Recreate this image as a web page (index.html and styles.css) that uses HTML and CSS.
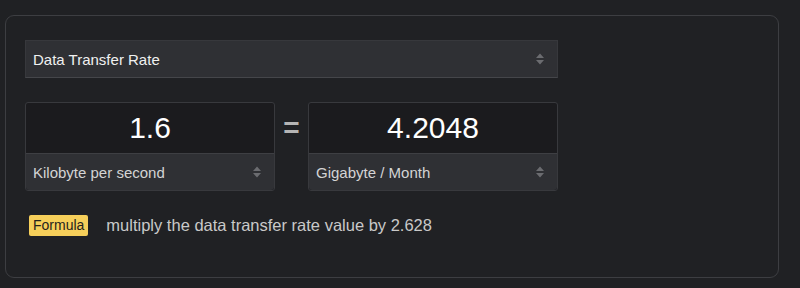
FILE: index.html
```html
<!DOCTYPE html>
<html>
<head>
    <meta charset="utf-8">
    <title>Data Transfer Rate Converter</title>
    <link rel="stylesheet" href="styles.css">
</head>
<body>
    <div class="card">
        <div class="select wide">
            <span>Data Transfer Rate</span>
            <svg class="arrows" width="10" height="14" viewBox="0 0 10 14"><path d="M1 6 L5 1.5 L9 6 Z M1 8 L5 12.5 L9 8 Z" fill="#6b6c70"/></svg>
        </div>

        <div class="converter">
            <div class="unit-box">
                <div class="value">1.6</div>
                <div class="select small">
                    <span>Kilobyte per second</span>
                    <svg class="arrows" width="10" height="14" viewBox="0 0 10 14"><path d="M1 6 L5 1.5 L9 6 Z M1 8 L5 12.5 L9 8 Z" fill="#6b6c70"/></svg>
                </div>
            </div>
            <div class="equals">=</div>
            <div class="unit-box">
                <div class="value">4.2048</div>
                <div class="select small">
                    <span>Gigabyte / Month</span>
                    <svg class="arrows" width="10" height="14" viewBox="0 0 10 14"><path d="M1 6 L5 1.5 L9 6 Z M1 8 L5 12.5 L9 8 Z" fill="#6b6c70"/></svg>
                </div>
            </div>
        </div>

        <div class="formula">
            <span class="badge">Formula</span>
            <span class="formula-text">multiply the data transfer rate value by 2.628</span>
        </div>
    </div>
</body>
</html>
```

FILE: styles.css
```css
body {
    font-family: "Liberation Sans", Arial, sans-serif;
    margin: 0;
    padding: 15px 0 0 5px;
    background: #202124;
    color: #e8e8e8;
}

.card {
    width: 774px;
    height: 263px;
    box-sizing: border-box;
    border: 1px solid #3d3e42;
    border-radius: 9px;
    padding: 24px 19px;
}

.select {
    display: flex;
    align-items: center;
    justify-content: space-between;
    background: #2f3034;
    box-sizing: border-box;
    padding: 0 12px 0 7px;
}

.select.wide {
    width: 533px;
    height: 38px;
    font-size: 15px;
    color: #f0f0f0;
    border: 1px solid #37383c;
    border-bottom-color: #45464a;
}

.select.small {
    height: 37px;
    font-size: 15px;
    color: #d4d4d4;
    border-top: 1px solid #3e3f43;
    border-radius: 0 0 3px 3px;
}

.converter {
    display: flex;
    align-items: flex-start;
    margin-top: 24px;
}

.unit-box {
    width: 250px;
    box-sizing: border-box;
    border: 1px solid #38393d;
    border-radius: 3px;
    background: #1b1b1e;
}

.value {
    height: 50px;
    display: flex;
    align-items: center;
    justify-content: center;
    font-size: 30px;
    color: #ffffff;
}

.equals {
    width: 33px;
    text-align: center;
    font-size: 28px;
    font-weight: bold;
    color: #b5b5b5;
    line-height: 52px;
}

.formula {
    display: flex;
    align-items: center;
    margin-top: 24px;
    padding-left: 4px;
}

.badge {
    background: #f6cf5a;
    color: #26231c;
    font-size: 14px;
    padding: 2px 4px;
    border-radius: 2px;
    line-height: 17px;
}

.formula-text {
    margin-left: 18px;
    font-size: 16.5px;
    color: #c9c9c9;
}
```
